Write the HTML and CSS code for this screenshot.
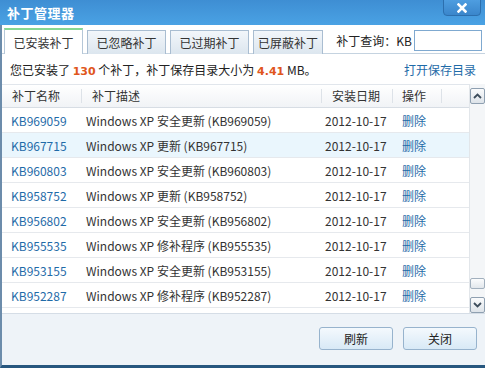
FILE: index.html
```html
<!DOCTYPE html>
<html lang="zh-CN">
<head>
  <meta charset="UTF-8">
  <title>补丁管理器</title>
  <link rel="stylesheet" href="styles.css">
</head>
<body>
  <div class="window">
    <div class="titlebar">
      <span class="title">补丁管理器</span>
      <button class="close-btn">
        <svg width="10" height="10" viewBox="0 0 10 10"><path d="M1.5 1.5 L8.5 8.5 M8.5 1.5 L1.5 8.5" stroke="#fff" stroke-width="2.6" stroke-linecap="square"/></svg>
      </button>
    </div>

    <div class="frame">
      <div class="tabbar">
        <div class="tab active">已安装补丁</div>
        <div class="tab">已忽略补丁</div>
        <div class="tab">已过期补丁</div>
        <div class="tab">已屏蔽补丁</div>
        <div class="search">
          <span>补丁查询：KB</span>
          <input type="text" class="search-input">
        </div>
      </div>

      <div class="info">
        <span>您已安装了 <b class="num">130</b> 个补丁，补丁保存目录大小为 <b class="num">4.41</b> MB。</span>
        <a class="link" href="#">打开保存目录</a>
      </div>

      <div class="list">
        <div class="table">
          <div class="row head">
            <div class="c-name">补丁名称</div>
            <div class="c-desc">补丁描述</div>
            <div class="c-date">安装日期</div>
            <div class="c-op">操作</div>
            <div class="c-rest"></div>
          </div>
          <div id="rows"></div>
        </div>
        <div class="scrollbar">
          <div class="sb-btn">
            <svg width="9" height="6" viewBox="0 0 9 6"><path d="M1 5 L4.5 1.5 L8 5" fill="none" stroke="#3d4d5c" stroke-width="1.8"/></svg>
          </div>
          <div class="sb-track"><div class="sb-thumb"></div></div>
          <div class="sb-btn">
            <svg width="9" height="6" viewBox="0 0 9 6"><path d="M1 1 L4.5 4.5 L8 1" fill="none" stroke="#3d4d5c" stroke-width="1.8"/></svg>
          </div>
        </div>
      </div>

      <div class="footer">
        <button class="btn">刷新</button>
        <button class="btn">关闭</button>
      </div>
    </div>
  </div>

  <script>
    var patches = [
      ['KB969059', 'Windows XP 安全更新 (KB969059)'],
      ['KB967715', 'Windows XP 更新 (KB967715)'],
      ['KB960803', 'Windows XP 安全更新 (KB960803)'],
      ['KB958752', 'Windows XP 更新 (KB958752)'],
      ['KB956802', 'Windows XP 安全更新 (KB956802)'],
      ['KB955535', 'Windows XP 修补程序 (KB955535)'],
      ['KB953155', 'Windows XP 安全更新 (KB953155)'],
      ['KB952287', 'Windows XP 修补程序 (KB952287)'],
      ['KB951748', 'Windows XP 安全更新 (KB951748)']
    ];

    var html = '';
    patches.forEach(function(p, i) {
      html += '<div class="row' + (i === 1 ? ' hover' : '') + '">' +
        '<div class="c-name"><a class="link" href="#">' + p[0] + '</a></div>' +
        '<div class="c-desc">' + p[1] + '</div>' +
        '<div class="c-date">2012-10-17</div>' +
        '<div class="c-op"><a class="link" href="#">删除</a></div>' +
        '<div class="c-rest"></div>' +
        '</div>';
    });
    document.getElementById('rows').innerHTML = html;
  </script>
</body>
</html>
```

FILE: styles.css
```css
* {
  box-sizing: border-box;
}
body {
  margin: 0;
  font-family: "Noto Sans CJK SC", "DejaVu Sans", sans-serif;
  font-size: 12px;
  color: #222;
  background: #fff;
}
.window {
  width: 485px;
  height: 368px;
  display: flex;
  flex-direction: column;
  overflow: hidden;
}
.titlebar {
  position: relative;
  height: 25px;
  flex: none;
  background: linear-gradient(#3e8ed3, #4aa2e4);
  display: flex;
  align-items: center;
  padding-left: 7px;
}
.title {
  color: #fff;
  font-weight: bold;
  font-size: 13px;
  letter-spacing: 0.5px;
}
.close-btn {
  position: absolute;
  top: -1px;
  right: 4px;
  width: 38px;
  height: 17px;
  border: 1px solid #2c6fae;
  border-radius: 0 0 4px 4px;
  background: linear-gradient(#4e9de0, #3a86cb);
  display: flex;
  align-items: center;
  justify-content: center;
  padding: 0;
}
.frame {
  flex: 1;
  display: flex;
  flex-direction: column;
  border-left: 2px solid #6c8cab;
  border-bottom: 3px solid #27577f;
  background: #eef3f8;
}
.tabbar {
  height: 29px;
  flex: none;
  display: flex;
  align-items: flex-end;
  gap: 4px;
  padding-left: 2px;
  background: #fff;
  border-bottom: 1px solid #c5d3e0;
}
.tab {
  width: 79px;
  height: 24px;
  margin-bottom: -1px;
  border: 1px solid #a9bdd1;
  border-bottom: none;
  background: linear-gradient(#f2f6fa, #dce6ef);
  display: flex;
  align-items: center;
  justify-content: center;
  color: #333;
  font-size: 12px;
}
.tab.active {
  height: 26px;
  background: #fff;
  border-color: #b5c7d8;
  border-top: 2px solid #86d792;
}
.tab:nth-child(4) {
  width: 70px;
}
.search {
  margin-left: auto;
  align-self: center;
  display: flex;
  align-items: center;
  gap: 2px;
  padding-top: 3px;
  margin-right: 3px;
}
.search-input {
  width: 68px;
  height: 21px;
  border: 1px solid #7fa9d0;
  padding: 0 3px;
}
.info {
  height: 30px;
  flex: none;
  display: flex;
  align-items: center;
  justify-content: space-between;
  padding: 0 9px 0 8px;
  background: #fff;
}
.num {
  color: #e0561c;
  font-family: "DejaVu Sans", sans-serif;
  font-size: 11px;
}
.link {
  color: #1f6ba8;
  text-decoration: none;
}
.list {
  height: 230px;
  flex: none;
  display: flex;
  background: #fff;
  border-bottom: 1px solid #d5dde6;
  overflow: hidden;
}
.table {
  flex: 1;
  border-top: 1px solid #e1e6ec;
}
.row {
  display: flex;
  height: 25px;
  align-items: center;
  border-bottom: 1px solid #e6e9ed;
  white-space: nowrap;
}
.row.hover {
  background: #eaf6fd;
}
.row.head {
  height: 23px;
  background: linear-gradient(#fff, #f1f3f6);
  border-bottom: 1px solid #d7dde4;
  color: #333;
}
.row.head > div {
  padding-left: 10px;
  border-right: 1px solid #dde2e8;
  line-height: 14px;
}
.row.head > div:last-child {
  border-right: none;
}
.c-name {
  width: 80px;
  padding-left: 9px;
}
.c-desc {
  width: 240px;
  padding-left: 4px;
  color: #333;
}
.c-date {
  width: 71px;
  padding-left: 3px;
  color: #333;
}
.c-op {
  width: 49px;
  padding-left: 9px !important;
}
.c-rest {
  flex: 1;
}
.scrollbar {
  width: 16px;
  flex: none;
  display: flex;
  flex-direction: column;
  background: #f4f6f8;
  border-left: 1px solid #e2e6ea;
  padding-top: 4px;
}
.sb-btn {
  height: 16px;
  border: 1px solid #8fa0b1;
  border-radius: 2px;
  background: linear-gradient(#fafbfc, #dde3e9);
  display: flex;
  align-items: center;
  justify-content: center;
}
.sb-track {
  flex: 1;
  display: flex;
  flex-direction: column;
  justify-content: flex-end;
  padding-bottom: 8px;
}
.sb-thumb {
  height: 11px;
  border: 1px solid #a2b0be;
  border-radius: 2px;
  background: linear-gradient(#fbfcfd, #e2e7ec);
}
.footer {
  flex: 1;
  display: flex;
  justify-content: flex-end;
  align-items: flex-start;
  gap: 10px;
  padding: 13px 8px 0 0;
}
.btn {
  width: 74px;
  height: 23px;
  border: 1px solid #97b3cd;
  border-radius: 3px;
  background: linear-gradient(#f4f9fd, #d8e9f6);
  color: #222;
  font-family: "Noto Sans CJK SC", sans-serif;
  font-size: 12px;
  padding: 0;
}
```
